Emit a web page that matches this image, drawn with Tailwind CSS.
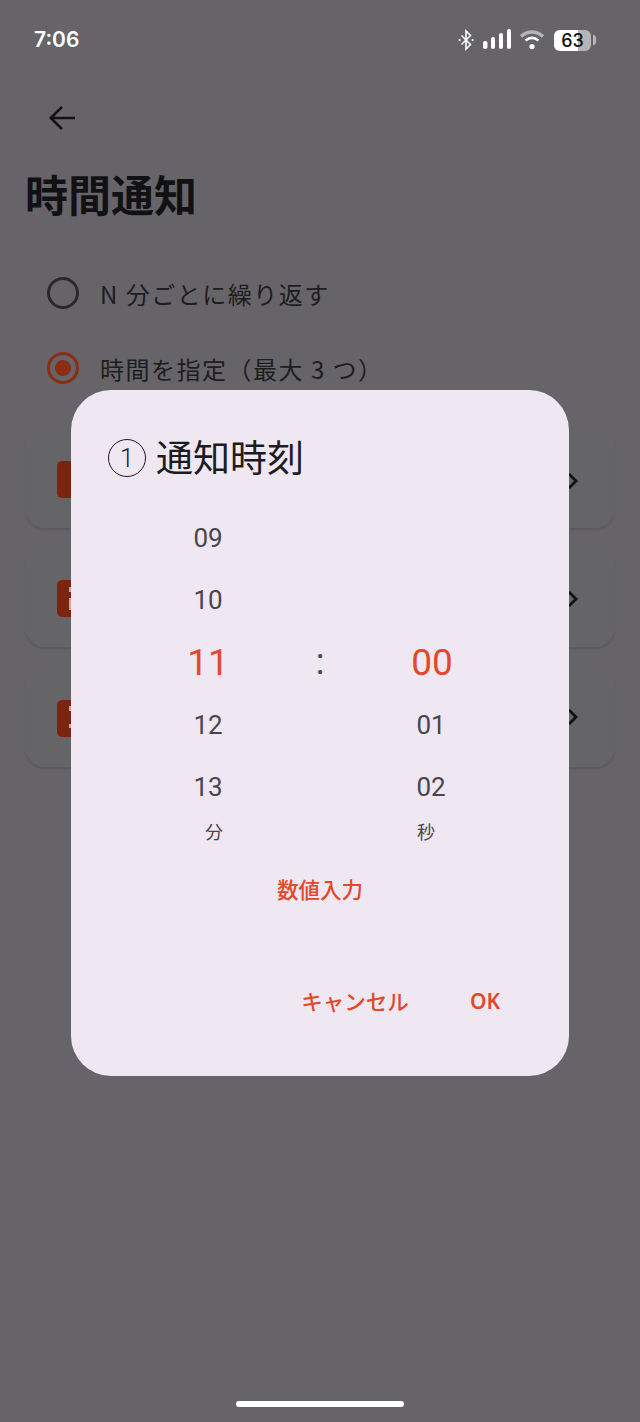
<!DOCTYPE html>
<html lang="ja">
<head>
  <meta charset="UTF-8" />
  <meta name="viewport" content="width=device-width, initial-scale=1.0" />
  <title>時間通知</title>
  <script src="https://cdn.jsdelivr.net/npm/@tailwindcss/browser@4"></script>
</head>
<body class="bg-[#666468] font-['Noto_Sans_CJK_JP','Noto_Sans',sans-serif]">
<div class="relative w-[640px] h-[1422px] overflow-hidden bg-[#666468] text-[#111113]">

  <!-- status bar -->
  <div class="flex items-center justify-between h-[40px] mt-[20px] pl-[34px] pr-[44px] text-white">
    <span class="font-['Inter'] font-semibold text-[21px] leading-none mt-[-2px]">7:06</span>
    <div class="flex items-center">
      <svg class="w-[16px] h-[22px]" viewBox="0 0 16 22" fill="none" stroke="#fff" stroke-width="1.6"><path d="M3.5 6.5 12.5 15.5 8 20V2l4.5 4.5L3.5 15.5" /><circle cx="1.6" cy="11" r="1.1" fill="#fff" stroke="none"/><circle cx="14.6" cy="11" r="1.1" fill="#fff" stroke="none"/></svg>
      <svg class="w-[28px] h-[20px] ml-[9px] mt-[-2px]" viewBox="0 0 28 20" fill="#fff"><rect x="0" y="12" width="4.5" height="8" rx="2"/><rect x="8" y="8" width="4" height="12" rx="2"/><rect x="16" y="4" width="4" height="16" rx="2"/><rect x="24" y="0" width="4" height="20" rx="2"/></svg>
      <svg class="w-[26px] h-[22px] ml-[8px]" viewBox="0 0 26 22" fill="none"><path d="M2 7.5C8.5 1.5 17.5 1.5 24 7.5" stroke="#b5b4b6" stroke-width="3.4"/><path d="M6.5 11.5C10.5 8.3 15.5 8.3 19.5 11.5" stroke="#fff" stroke-width="2.8"/><circle cx="13" cy="17.5" r="2.6" fill="#fff"/></svg>
      <div class="relative ml-[9px] w-[37px] h-[21px] rounded-[6px] overflow-hidden bg-[#b5b4b6]">
        <div class="h-full w-[24px] bg-white"></div>
        <span class="absolute inset-0 flex items-center justify-center pt-[1px] font-['Inter'] font-medium text-[18px] leading-none text-[#111]">63</span>
      </div>
      <div class="ml-[2px] w-[3px] h-[10px] rounded-r-sm bg-[#b5b4b6]"></div>
    </div>
  </div>

  <!-- header -->
  <div class="mt-[45px] pl-[48px] h-[38px]">
    <svg class="w-[28px] h-[26px] mt-[6px]" viewBox="0 0 28 26" fill="none" stroke="#111113" stroke-width="2.6"><path d="M27 13H3M14 1.8 2.8 13 14 24.2"/></svg>
  </div>
  <h1 class="mt-[22px] ml-[25px] font-bold text-[43px] leading-[56px]">時間通知</h1>

  <!-- radio options -->
  <div class="mt-[50px] ml-[47px] flex items-center h-[44px] text-[24px] tracking-[1.5px] text-[#1d1d20]">
    <span class="w-[32px] h-[32px] rounded-full border-[3px] border-[#29292c]"></span>
    <span class="ml-[21px] mt-[2px]">N 分ごとに繰り返す</span>
  </div>
  <div class="mt-[31px] ml-[47px] flex items-center h-[44px] text-[24px] tracking-[1.5px] text-[#1d1d20]">
    <span class="flex items-center justify-center w-[32px] h-[32px] rounded-full border-[3px] border-[#8a2d14]">
      <span class="w-[16px] h-[16px] rounded-full bg-[#8a2d14]"></span>
    </span>
    <span class="ml-[21px] mt-[2px]">時間を指定（最大 3 つ）</span>
  </div>

  <!-- cards behind the dialog -->
  <div class="mt-[38px] mx-[25px] flex flex-col gap-[19px]">
    <div class="flex items-center justify-between h-[100px] pl-[32px] pr-[35px] rounded-[20px] bg-[#656467] shadow-[0_2px_2px_rgba(0,0,0,0.1)]">
      <div class="w-[36px] h-[37px] mt-[3px] rounded-[5px] bg-[#7d2410]"></div>
      <svg class="w-[14px] h-[20px] mt-[6px]" viewBox="0 0 14 20" fill="none" stroke="#111113" stroke-width="2.8"><path d="M3 3l7 7-7 7"/></svg>
    </div>
    <div class="flex items-center justify-between h-[100px] pl-[32px] pr-[35px] rounded-[20px] bg-[#656467] shadow-[0_2px_2px_rgba(0,0,0,0.1)]">
      <div class="relative w-[36px] h-[37px] mt-[3px] rounded-[5px] bg-[#7d2410]">
        <span class="absolute left-[12px] top-[7px] w-[2px] h-[5px] bg-[#c9a89f]"></span>
        <span class="absolute left-[12px] top-[18px] w-[2px] h-[12px] bg-[#c9a89f]"></span>
      </div>
      <svg class="w-[14px] h-[20px] mt-[4px]" viewBox="0 0 14 20" fill="none" stroke="#111113" stroke-width="2.8"><path d="M3 3l7 7-7 7"/></svg>
    </div>
    <div class="flex items-center justify-between h-[101px] pl-[32px] pr-[35px] rounded-[20px] bg-[#656467] shadow-[0_2px_2px_rgba(0,0,0,0.1)]">
      <div class="relative w-[36px] h-[37px] mt-[3px] rounded-[5px] bg-[#7d2410]">
        <span class="absolute left-[12px] top-[6px] w-[2px] h-[5px] bg-[#c9a89f]"></span>
        <span class="absolute left-[12px] top-[24px] w-[2px] h-[4px] bg-[#c9a89f]"></span>
      </div>
      <svg class="w-[14px] h-[20px] mt-[1px]" viewBox="0 0 14 20" fill="none" stroke="#111113" stroke-width="2.8"><path d="M3 3l7 7-7 7"/></svg>
    </div>
  </div>

  <!-- dialog -->
  <div class="absolute left-[71px] top-[390px] w-[498px] h-[686px] rounded-[40px] bg-[#efe7f2]">
    <div class="mt-[41px] ml-[37px] flex items-center h-[54px] text-[#1c1b1f]">
      <span class="flex items-center justify-center w-[38px] h-[38px] rounded-full border-[1.5px] border-[#1c1b1f] font-['Roboto'] font-light text-[25px] leading-none">1</span>
      <span class="ml-[10px] text-[37px] leading-none mt-[-4px]">通知時刻</span>
    </div>

    <div class="mt-[22px] ml-[81px] grid grid-cols-[112px_112px_112px] grid-rows-[repeat(5,62.3px)] items-center justify-items-center font-['Roboto'] text-[26px] text-[#48464c]">
      <span>09</span><span></span><span></span>
      <span>10</span><span></span><span></span>
      <span class="text-[37px] text-[#e2492a]">11</span><span class="text-[36px] leading-none mt-[-1px]">:</span><span class="text-[37px] text-[#e2492a]">00</span>
      <span>12</span><span></span><span class="mr-[2px]">01</span>
      <span>13</span><span></span><span class="mr-[2px]">02</span>
    </div>

    <div class="relative h-[28px] mt-[-1px] text-[18px] leading-[28px] text-[#48464c]">
      <span class="absolute left-[134px]">分</span>
      <span class="absolute left-[346px]">秒</span>
    </div>

    <div class="mt-[28px] text-center text-[21.5px] leading-[32px] font-medium text-[#e2492a]">数値入力</div>

    <div class="mt-[80px] flex justify-end items-center pr-[69px] text-[21.5px] leading-[32px] font-medium text-[#e2492a]">
      <span>キャンセル</span>
      <span class="ml-[61px] font-['Noto_Sans'] font-semibold text-[21px]">OK</span>
    </div>
  </div>

  <!-- gesture bar -->
  <div class="absolute left-[236px] top-[1401px] w-[168px] h-[6px] rounded-full bg-white"></div>
</div>
</body>
</html>
